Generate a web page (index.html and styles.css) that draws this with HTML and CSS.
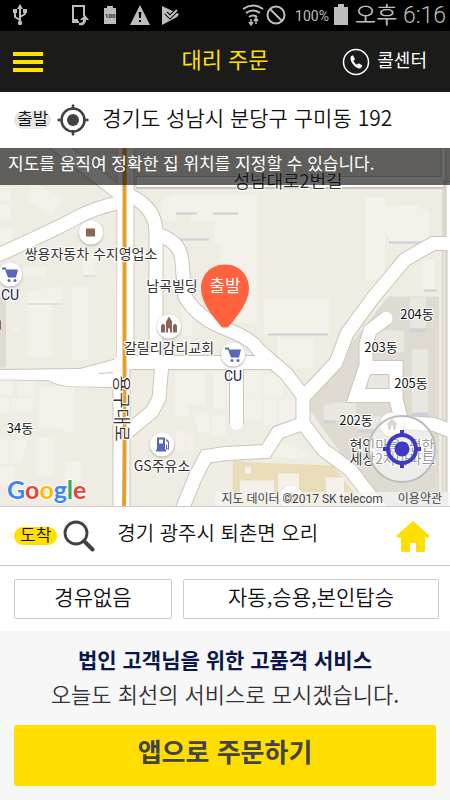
FILE: index.html
```html
<!DOCTYPE html>
<html lang="ko">
<head>
<meta charset="utf-8">
<meta name="viewport" content="width=device-width, initial-scale=1">
<title>대리 주문</title>
<link rel="stylesheet" href="styles.css">
</head>
<body>
<div class="status">
  <svg class="status-left" width="182" height="31" viewBox="0 0 182 31" fill="#bdbdbd" aria-hidden="true">
    <g fill="none" stroke="#bdbdbd" stroke-width="2"><path d="M20 7v16M20 20l-5-3v-5M20 17l5-3v-4"/></g>
    <path d="M20 4l3 5h-6zM13 9h4v4h-4zM23 9h4v4h-4z"/><circle cx="20" cy="23" r="2.200"/>
    <path fill="none" stroke="#bdbdbd" stroke-width="2" d="M79 22h-6V6h11v10M73 20h5"/>
    <path d="M79 25v-2c3 0 4-1 4-3h-3l5-5 4 5h-3c0 4-3 6-7 5z"/>
    <path d="M107 6h6v2h3v16h-12V8h3z"/><text x="105" y="18" font-size="6" font-weight="700" fill="#222">100</text>
    <path d="M140 5l10 20h-20z"/><path d="M138.700 12h2.600l-.4 6h-1.800zM139 20h2v2h-2z" fill="#000"/>
    <path d="M162 6l17 8-2 3-15 8z"/><path d="M166 13l4 4 8-8" fill="none" stroke="#000" stroke-width="4"/><path d="M166 13l4 4 7-7" fill="none" stroke="#bdbdbd" stroke-width="2"/>
  </svg>
  <div class="status-right">
    <svg width="50" height="31" viewBox="0 0 50 31" fill="none" stroke="#bdbdbd" stroke-width="2" aria-hidden="true">
      <path d="M2 9q10-7 20 0M5 13q7-5 14 0M8 17q4-3 8 0"/><path d="M10 25v-6m-2 3l2 3 2-3M15 18v6m-2-3l2-3 2 3" stroke-width="1.500"/>
      <circle cx="35" cy="15" r="8.500"/><path d="M29 9l12 12"/>
    </svg>
    <span class="percent">100%</span>
    <svg width="14" height="31" viewBox="0 0 14 31" fill="#bdbdbd" aria-hidden="true"><path d="M4 4h6v3h4v18H0V7h4z"/></svg>
    <span class="time">오후 6:16</span>
  </div>
</div>

<header class="appbar">
  <button class="menu" aria-label="메뉴"><i></i><i></i><i></i></button>
  <h1>대리 주문</h1>
  <a class="call" href="#call">
    <svg width="28" height="28" viewBox="0 0 28 28" aria-hidden="true"><circle cx="14" cy="14" r="12.500" fill="none" stroke="#fff" stroke-width="1.500"/><path d="M9 8.300l2-1 2 4-1.600 1.500c.7 1.800 1.900 3.100 3.600 4l1.700-1.600 3.600 2.300-1.100 2.300c-1.300 1.300-4.300.4-6.700-1.900-2.800-2.600-4.800-6.800-3.500-9.600z" fill="#fff"/></svg>
    <span>콜센터</span>
  </a>
</header>

<main class="content">
<div class="place">
  <label class="tag" for="from">출발</label>
  <svg width="32" height="32" viewBox="0 0 32 32" fill="none" stroke="#424242" stroke-width="2.500" aria-hidden="true"><circle cx="16" cy="16" r="11.500"/><path d="M16 .5V6M16 26v5.500M.5 16H6M26 16h5.500"/><circle cx="16" cy="16" r="6" fill="#424242" stroke="none"/></svg>
  <input id="from" type="text" value="경기도 성남시 분당구 구미동 192">
</div>

<section class="map" aria-label="지도">
  <svg class="tiles" viewBox="0 148 450 359" preserveAspectRatio="xMidYMid slice">
    <defs>
      <g id="roads">
        <path d="M50 140L117 192M-5 257Q55 230 75 219T120 203" />
        <path d="M130 196Q157 209 156 235V362M157 235Q181 241 182 263L185 297Q197 318 225 329T258 350L286 374 303 396V424L323 450 350 470 385 515"/>
        <path d="M304 397L336 363 347 334 374 297 405 260 433 244H460M303 424L278 433 266 452 225 454 206 457 196 476 180 515"/>
        <path d="M162 363L159 399 152 412 128 432M120 363L153 363H270M236.500 360V424"/>
        <path d="M386 319L370 331 366 345V366L356 396H396M366 368H396V400L402 423 434 425 455 433"/>
      </g>
      <g id="cart"><path d="M-8-7h4v2H8L6 3h-8l-3-8h-3z"/><circle cx="-1" cy="6" r="1.500"/><circle cx="5" cy="6" r="1.500"/></g>
    </defs>
    <path fill="#efece4" d="M0 100h450v450H0z"/>
    <path fill="#dfdbd2" d="M388 297h51v210h-60l-76-106 49-58zM0 297h6v71H0z"/>
    <path fill="#e9dcb9" d="M233 461l21 2 79 3 32 41H233z"/>
    <g fill="#f4f1ea">
      <path d="M32 182l31 17-11 17-25-15zM0 188h11v14H0zM0 205h11v15H0zM0 228h12v16H0zM23 267h23v10H23zM83 256h12v20H83zM28 291l34-4v18H52v53H28zM72 287h16v73H72zM12 328h8v4h-8zM39 387h35v46H63v-4H39zM0 382h13v14H0zM18 382h17v14H18zM0 398h10v16H0zM11 399l24-1-4 15H11zM0 440h9v24H0zM10 441l18-1-7 24H10zM36 438h18v38H36zM65 462h16v20H65zM0 467h15v20H0z"/>
      <path d="M161 201l14-7h48l-1 28h-31v-9h-15v9h-14zM214 195h43v131l-37-7V246h-6zM163 249h12v40h-12zM264 299h65v36h-65zM277 338h37v30h-37zM365 198h20v82h-20zM382 207h12v-1h27v4h8v32h-38l-5-9h-4zM422 262l13-4v33h-13zM182 310h10v26h-10zM175 373h30v33h-16v10h-14zM213 373h12v36h-12zM193 414l15-2 3 21h-13zM212 416h14v20h-14zM176 431h9v21h-9zM186 434h7v17h-7zM227 372h8v36h-8zM243 372h19v23h-19zM263 374h20v24h-20zM243 396h19v24h-19zM264 400h13v25h-13zM279 400h18v24h-18zM274 443q14-2 38 13-11 5-40 1z"/>
      <path d="M245 467h6v7h-6zM240 481h34v18h-34zM278 474h21v28h-21zM326 478h18v24h-18z"/>
      <circle cx="299" cy="354" r="15"/>
    </g>
    <g fill="#eae7e1"><path d="M323 406l10-3h23v18h-32zM357 417h25v14h-25zM410 298h16v31h-16zM376 331h28v22h-28zM412 350h16v65h-16zM368 376h21v16h-21z"/></g>
    <g fill="#cfd0d9"><path d="M176 213h21v2h-21zM164 232l13 7h32v2h-34l-14-7zM268 334h60v2h-60zM324 421h12v3h-12zM357 430h23v3h-23zM410 329h16v4h-16zM412 413h16v4h-16zM424 290h13v2h-13zM213 213h25v2h-25zM389 242h36v2h-36zM28 304h34v1H28zM83 276h13v1H83z"/></g>
    <use href="#roads" fill="none" stroke="#cbc5ba" stroke-width="15"/>
    <path d="M117 140V359L80 369-2 370V380L48 381Q58 387 74 387L113 388V515H130V370L134 355V140zM136 177H441V140H446V515H470V182H444V188H136z" fill="#fff" stroke="#cbc5ba"/>
    <path d="M439 188H445V236L447 239V507H443V189H136" fill="none" stroke="#ccc5b8"/>
    <use href="#roads" fill="none" stroke="#fff" stroke-width="13" stroke-linecap="round"/>
    <path fill="#fff" d="M118 140h14v215l-3 14v140h-15V386h3zM0 371l80-1 38-8v25H74Q58 386 48 380H0z"/>
    <path d="M99 374l14-1" stroke="#ccc5b8"/>
    <path d="M124.500 140V460L124 515" fill="none" stroke="#e1a12f" stroke-width="4"/>
    <g fill="#fff" class="spots"><circle cx="91" cy="233" r="12"/><circle cx="10" cy="275" r="12"/><circle cx="169" cy="327" r="12"/><circle cx="233" cy="355" r="12"/><circle cx="162" cy="445" r="12"/><circle cx="392" cy="425" r="12"/><circle cx="291" cy="498" r="12"/></g>
    <path fill="#8a6658" d="M86 229h9v8h-9zM0 321h1v9H0zM161 333v-7l2-2 2 2v7zM173 333v-7l2-2 2 2v7zM166 333v-11l3-5 3 5v11h-2v-4h-2v4z"/>
    <path fill="#bca8a0" d="M386 425l6-6 6 6h-2v5h-3v-4h-2v4h-3v-5z"/>
    <path fill="#bca8a0" d="M285 498l6-6 6 6v6h-12z"/>
    <g fill="#5a65bd"><use href="#cart" x="10" y="275"/><use href="#cart" x="233" y="355"/></g>
    <path fill="#5a65bd" fill-rule="evenodd" d="M157 438h8v12h1v2h-10v-2h1zM159 440v4h4v-4zM166 439l3 3v8h-3v-5h1v4h1v-6l-2-2z"/>
    <g class="labels" text-anchor="middle">
      <text x="91" y="259">쌍용자동차 수지영업소</text>
      <text x="172" y="291">남곡빌딩</text>
      <text x="169" y="353">갈릴리감리교회</text>
      <text class="latin" x="10" y="300">CU</text><text class="latin" x="233" y="381">CU</text>
      <text x="162" y="471">GS주유소</text>
      <g class="block"><text x="20" y="433">34동</text><text x="417" y="319">204동</text><text x="381" y="352">203동</text><text x="411" y="388">205동</text><text x="356" y="425">202동</text></g>
      <text x="392" y="450">현인마을e편한</text><text x="392" y="464">세상2차아파트</text>
      <text class="street" x="288" y="188">성남대로2번길</text>
      <text class="street" transform="translate(115 409) rotate(90)">용구대로</text>
    </g>
    <g class="pin"><path fill="#ff623d" d="M225 265c15 0 24 11 24 24 0 14-12 28-21 39h-6c-9-11-21-25-21-39 0-13 9-24 24-24z"/><text x="225" y="292" text-anchor="middle">출발</text></g>
    <text class="google" x="7" y="499"><tspan fill="#4285f4">G</tspan><tspan fill="#ea4335">o</tspan><tspan fill="#fbbc05">o</tspan><tspan fill="#4285f4">g</tspan><tspan fill="#34a853">l</tspan><tspan fill="#ea4335">e</tspan></text>
  </svg>
  <p class="hint">지도를 움직여 정확한 집 위치를 지정할 수 있습니다.</p>
  <button class="locate" aria-label="현재 위치"><svg width="40" height="40" viewBox="0 0 40 40" fill="none" stroke="#3e3ac2" stroke-width="4"><circle cx="20" cy="20" r="14"/><path d="M20 1v7M20 32v7M1 20h7M32 20h7"/><circle cx="20" cy="20" r="7.500" fill="#3e3ac2" stroke="none"/></svg></button>
  <div class="credit"><span>지도 데이터 ©2017 SK telecom</span><a href="#terms">이용약관</a></div>
</section>

<div class="place dest">
  <label class="tag yellow" for="to">도착</label>
  <svg width="32" height="32" viewBox="0 0 32 32" fill="none" stroke="#424242" aria-hidden="true"><circle cx="13" cy="13" r="11" stroke-width="2.800"/><path d="M21 21l8.500 8.500" stroke-width="4" stroke-linecap="round"/></svg>
  <input id="to" type="text" value="경기 광주시 퇴촌면 오리">
  <button class="home" aria-label="집"><svg width="34" height="31" viewBox="0 0 34 31" fill="#ffde00"><path d="M17 0l16.500 14.500q.5 2-1.500 2h-3V29q0 2-2 2h-7v-9h-6v9H7q-2 0-2-2V16.500H2q-2 0-1.500-2z"/></svg></button>
</div>

<div class="options">
  <button>경유없음</button>
  <button>자동,승용,본인탑승</button>
</div>

<footer class="order">
  <p class="lead">법인 고객님을 위한 고품격 서비스</p>
  <p class="sub">오늘도 최선의 서비스로 모시겠습니다.</p>
  <button class="submit">앱으로 주문하기</button>
</footer>
</main>
</body>
</html>
```
FILE: styles.css
```css
* { box-sizing: border-box; }
body {
  margin: 0;
  min-height: 100vh;
  display: flex;
  flex-direction: column;
  background: #fff;
  color: #111;
  font-family: "Noto Sans CJK KR", sans-serif;
  font-weight: 350;
}
h1, p { margin: 0; }
button, input { font: inherit; color: inherit; border: 0; padding: 0; background: none; }
a { color: inherit; text-decoration: none; }
svg { display: block; flex: none; }

.status {
  display: flex;
  justify-content: space-between;
  height: 31px;
  padding-right: 4px;
  background: #000;
  color: #bdbdbd;
}
.status-left { font-family: Roboto, sans-serif; }
.status-right { display: flex; align-items: center; }
.percent { margin: 0 5px 0 4px; font: 400 14px Roboto, sans-serif; }
.time { margin-left: 7px; font-family: Roboto, "Noto Sans CJK KR", sans-serif; font-size: 23px; line-height: 30px; }

.appbar {
  display: grid;
  grid-template-columns: 1fr auto 1fr;
  align-items: center;
  height: 61px;
  padding: 0 13px;
  background: #1b1b19;
}
.appbar h1 { padding-bottom: 8px; color: #ffe000; font-size: 22px; font-weight: 400; line-height: 32px; }
.menu { display: flex; flex-direction: column; gap: 4px; width: 30px; }
.menu i { height: 4px; background: #ffe000; }
.call { justify-self: end; display: flex; align-items: center; gap: 7px; margin-right: 10px; color: #fff; font-size: 18px; font-weight: 400; line-height: 26px; }
.call span { padding-bottom: 6px; }

.content { flex: 1; display: flex; flex-direction: column; }
.place {
  display: flex;
  align-items: center;
  height: 56px;
  padding: 0 20px 0 14px;
}
.place input { flex: 1; min-width: 0; margin-left: 13px; padding-bottom: 6px; font-size: 21px; line-height: 32px; outline: 0; }
.tag { height: 18px; margin-right: 6px; padding: 0 3px; border-radius: 9px; background: #e6e6e6; font-size: 17px; line-height: 14px; }
.tag.yellow { padding: 0 6px; background: #ffde00; }
.dest { height: 59px; border-bottom: 1px solid #c8c8c8; }
.dest input { margin-left: 22px; font-size: 20px; }

.map { position: relative; flex: 1; min-height: 300px; overflow: hidden; border-bottom: 1px solid #ccc; background: #efece4; }
.tiles { position: absolute; width: 100%; height: 100%; }
.spots { filter: drop-shadow(0 1px 1px #aaa); }
.labels text { font-size: 14px; font-weight: 400; fill: #333; stroke: #fff; stroke-width: 2px; paint-order: stroke; }
.labels .block text { font-size: 13px; fill: #111; }
.labels .latin { font-family: Roboto, sans-serif; fill: #1d2350; }
.labels .street { font-size: 18px; font-weight: 350; }
.pin text { font-size: 17px; font-weight: 400; fill: #fff; }
.google { font: 700 25px Lato, sans-serif; stroke: #fff; stroke-width: 2px; paint-order: stroke; }
.hint { position: relative; padding: 0 8px 7px; background: rgba(0, 0, 0, .6); color: #fff; font-size: 17px; font-weight: 400; line-height: 30px; }
.locate {
  position: absolute;
  right: 14px;
  bottom: 23px;
  display: grid;
  place-items: center;
  width: 68px;
  height: 68px;
  border: 2px solid #bbb;
  border-radius: 50%;
  background: rgba(255, 255, 255, .5);
}
.credit {
  position: absolute;
  right: 0;
  bottom: 0;
  display: flex;
  gap: 15px;
  padding: 0 8px 0 6px;
  background: rgba(245, 245, 245, .7);
  color: #444;
  font: 400 12px/14px Roboto, "Noto Sans CJK KR", sans-serif;
}

.options { display: grid; grid-template-columns: 158px 1fr; gap: 11px; padding: 13px 11px 12px 14px; }
.options button { height: 40px; padding-bottom: 6px; border: 1px solid #ccc; border-radius: 2px; font-size: 21px; line-height: 32px; }

.order { padding: 12px 14px 14px; background: #f7f7f7; text-align: center; }
.lead { color: #0a1748; font-size: 21px; font-weight: 700; line-height: 32px; }
.sub { color: #333; font-size: 22px; line-height: 36px; }
.submit {
  width: 100%;
  height: 61px;
  margin-top: 14px;
  padding-bottom: 10px;
  border-radius: 3px;
  background: #ffde00;
  color: #444;
  font-size: 26px;
  font-weight: 700;
}
```
